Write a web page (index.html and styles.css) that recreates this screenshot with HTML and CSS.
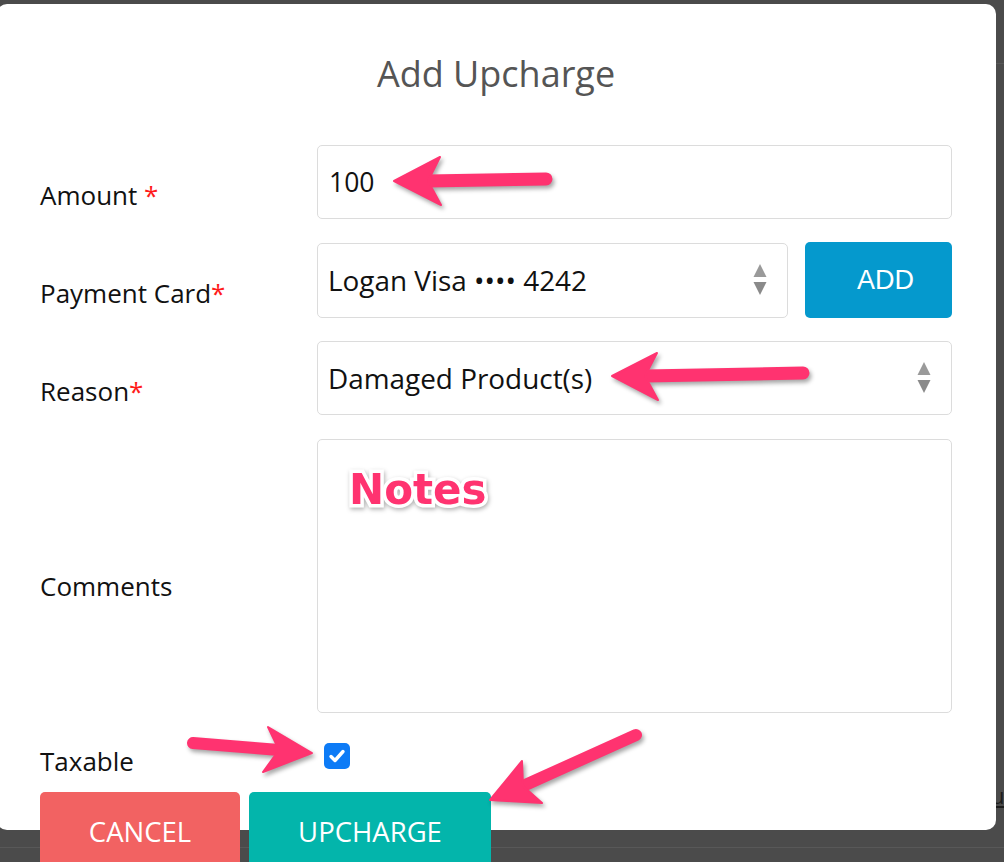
FILE: index.html
```html
<!DOCTYPE html>
<html lang="en">

<head>
  <meta charset="UTF-8">
  <meta name="viewport" content="width=device-width, initial-scale=1.0">
  <title>Add Upcharge</title>
  <link rel="stylesheet" href="styles.css">
</head>

<body>
  <!-- link behind the overlay -->
  <span class="behind-link">u</span>

  <div class="modal">
    <h2 class="modal-title">Add Upcharge</h2>

    <div class="form">
      <div class="row row-amount">
        <label class="label">Amount <span class="req">*</span></label>
        <div class="field">100</div>
      </div>

      <div class="row row-card">
        <label class="label">Payment Card<span class="req">*</span></label>
        <div class="field select">
          Logan Visa &bull;&bull;&bull;&bull; 4242
          <svg class="updown" width="14" height="33" viewBox="0 0 14 33">
            <polygon points="7,1 13.5,14 0.5,14" fill="#9a9a9a" />
            <polygon points="0.5,19 13.5,19 7,32" fill="#8a8a8a" />
          </svg>
        </div>
        <div class="btn-add">ADD</div>
      </div>

      <div class="row row-reason">
        <label class="label">Reason<span class="req">*</span></label>
        <div class="field select">
          Damaged Product(s)
          <svg class="updown" width="14" height="33" viewBox="0 0 14 33">
            <polygon points="7,1 13.5,14 0.5,14" fill="#9a9a9a" />
            <polygon points="0.5,19 13.5,19 7,32" fill="#8a8a8a" />
          </svg>
        </div>
      </div>

      <div class="row row-comments">
        <label class="label">Comments</label>
        <div class="field textarea">
          <span class="notes">Notes</span>
        </div>
      </div>

      <div class="row row-taxable">
        <label class="label">Taxable</label>
        <div class="checkbox">
          <svg width="26" height="26" viewBox="0 0 26 26">
            <path d="M7 13.5 L11 17.5 L19 8.5" fill="none" stroke="#fff" stroke-width="3.4" stroke-linecap="round" stroke-linejoin="round" />
          </svg>
        </div>
      </div>
    </div>

    <div class="actions">
      <div class="btn btn-cancel">CANCEL</div>
      <div class="btn btn-upcharge">UPCHARGE</div>
    </div>
  </div>

  <!-- annotation arrows -->
  <svg class="arrows" width="1004" height="862" viewBox="0 0 1004 862">
    <g fill="#ff3370" stroke="#ff3370" stroke-linecap="round" stroke-linejoin="round">
      <line x1="546" y1="179" x2="428" y2="181" stroke-width="13" />
      <polygon points="394,181 440,157 428,181 441,205" stroke-width="2" />

      <line x1="803" y1="373" x2="645" y2="376" stroke-width="13" />
      <polygon points="612,376 657,353 645,376 658,400" stroke-width="2" />

      <line x1="193" y1="743" x2="279" y2="750" stroke-width="12" />
      <polygon points="312,753 268,727 279,750 263,772" stroke-width="2" />

      <line x1="636" y1="735" x2="523" y2="786" stroke-width="12" />
      <polygon points="490,800 522,761 523,786 542,803" stroke-width="2" />
    </g>
  </svg>
</body>

</html>
```

FILE: styles.css
```css
html,
body {
  margin: 0;
  height: 100%;
  overflow: hidden;
}

body {
  background-color: #4b4b4b;
  background-image:
    linear-gradient(to bottom, transparent 63px, #585858 63px, #585858 64px, transparent 64px),
    linear-gradient(to bottom, transparent 847px, #585858 847px, #585858 848px, transparent 848px);
  font-family: 'Open Sans', 'Liberation Sans', Arial, sans-serif;
  position: relative;
}

.behind-link {
  position: absolute;
  left: 991px;
  top: 780px;
  font-size: 22px;
  color: #1c1c1c;
  text-decoration: underline;
}

.modal {
  position: relative;
  margin: 4px 0 0 -3px;
  width: 999px;
  height: 826px;
  box-sizing: border-box;
  padding: 0 44px 0 43px;
  background: #fff;
  border-radius: 10px;
}

.modal-title {
  margin: 0;
  padding-top: 52px;
  font-size: 36px;
  font-weight: 400;
  line-height: 1;
  color: #555;
  text-align: center;
}

.form {
  margin-top: 53px;
}

.row {
  display: flex;
  align-items: center;
  margin-bottom: 23px;
}

.label {
  width: 277px;
  flex: none;
  margin-top: 25px;
  font-size: 26px;
  color: #111;
}

.req {
  color: #ff1a1a;
}

.field {
  flex: 1;
  display: flex;
  align-items: center;
  box-sizing: border-box;
  height: 74px;
  padding: 0 11px;
  border: 1px solid #dcdcdc;
  border-radius: 5px;
  font-size: 26.5px;
  color: #111;
  position: relative;
}

.select {
  font-size: 27.9px;
  padding-left: 10px;
}

.row-card .field {
  height: 75px;
}

.row-reason {
  margin-bottom: 24px;
}

.select .updown {
  position: absolute;
  right: 20px;
  top: 50%;
  margin-top: -17px;
}

.btn-add {
  width: 147px;
  height: 76px;
  margin-left: 17px;
  padding-left: 14px;
  box-sizing: border-box;
  flex: none;
  border-radius: 5px;
  background-color: #0599cd;
  color: #fff;
  font-family: 'Liberation Sans', Arial, sans-serif;
  font-size: 27px;
  line-height: 76px;
  text-align: center;
}

.row-comments {
  margin-bottom: 30px;
}

.row-comments .label {
  margin-top: 20px;
}

.textarea {
  height: 274px;
}

.notes {
  position: absolute;
  left: 31px;
  top: 29px;
  font-family: 'DejaVu Sans', sans-serif;
  font-weight: bold;
  font-size: 42px;
  line-height: 1;
  color: #ff3370;
  -webkit-text-stroke: 7px #fff;
  paint-order: stroke fill;
  filter: drop-shadow(1px 2px 2px rgba(0, 0, 0, 0.3));
}

.row-taxable {
  align-items: flex-start;
  height: 26px;
  margin-bottom: 23px;
}

.row-taxable .label {
  margin-top: 1px;
  line-height: 1.36;
}

.checkbox {
  width: 26px;
  height: 26px;
  margin-left: 7px;
  border-radius: 5px;
  background-color: #0d7bf6;
}

.checkbox svg {
  display: block;
}

.actions {
  display: flex;
  gap: 9px;
}

.btn {
  height: 80px;
  border-radius: 5px;
  color: #fff;
  font-size: 27.5px;
  font-weight: 400;
  line-height: 80px;
  text-align: center;
}

.btn-cancel {
  width: 200px;
  background-color: #f26262;
}

.btn-upcharge {
  width: 242px;
  background-color: #03b5ab;
}

.arrows {
  position: absolute;
  left: 0;
  top: 0;
  z-index: 10;
  pointer-events: none;
  filter: drop-shadow(2px 3px 2px rgba(0, 0, 0, 0.35));
}
```
